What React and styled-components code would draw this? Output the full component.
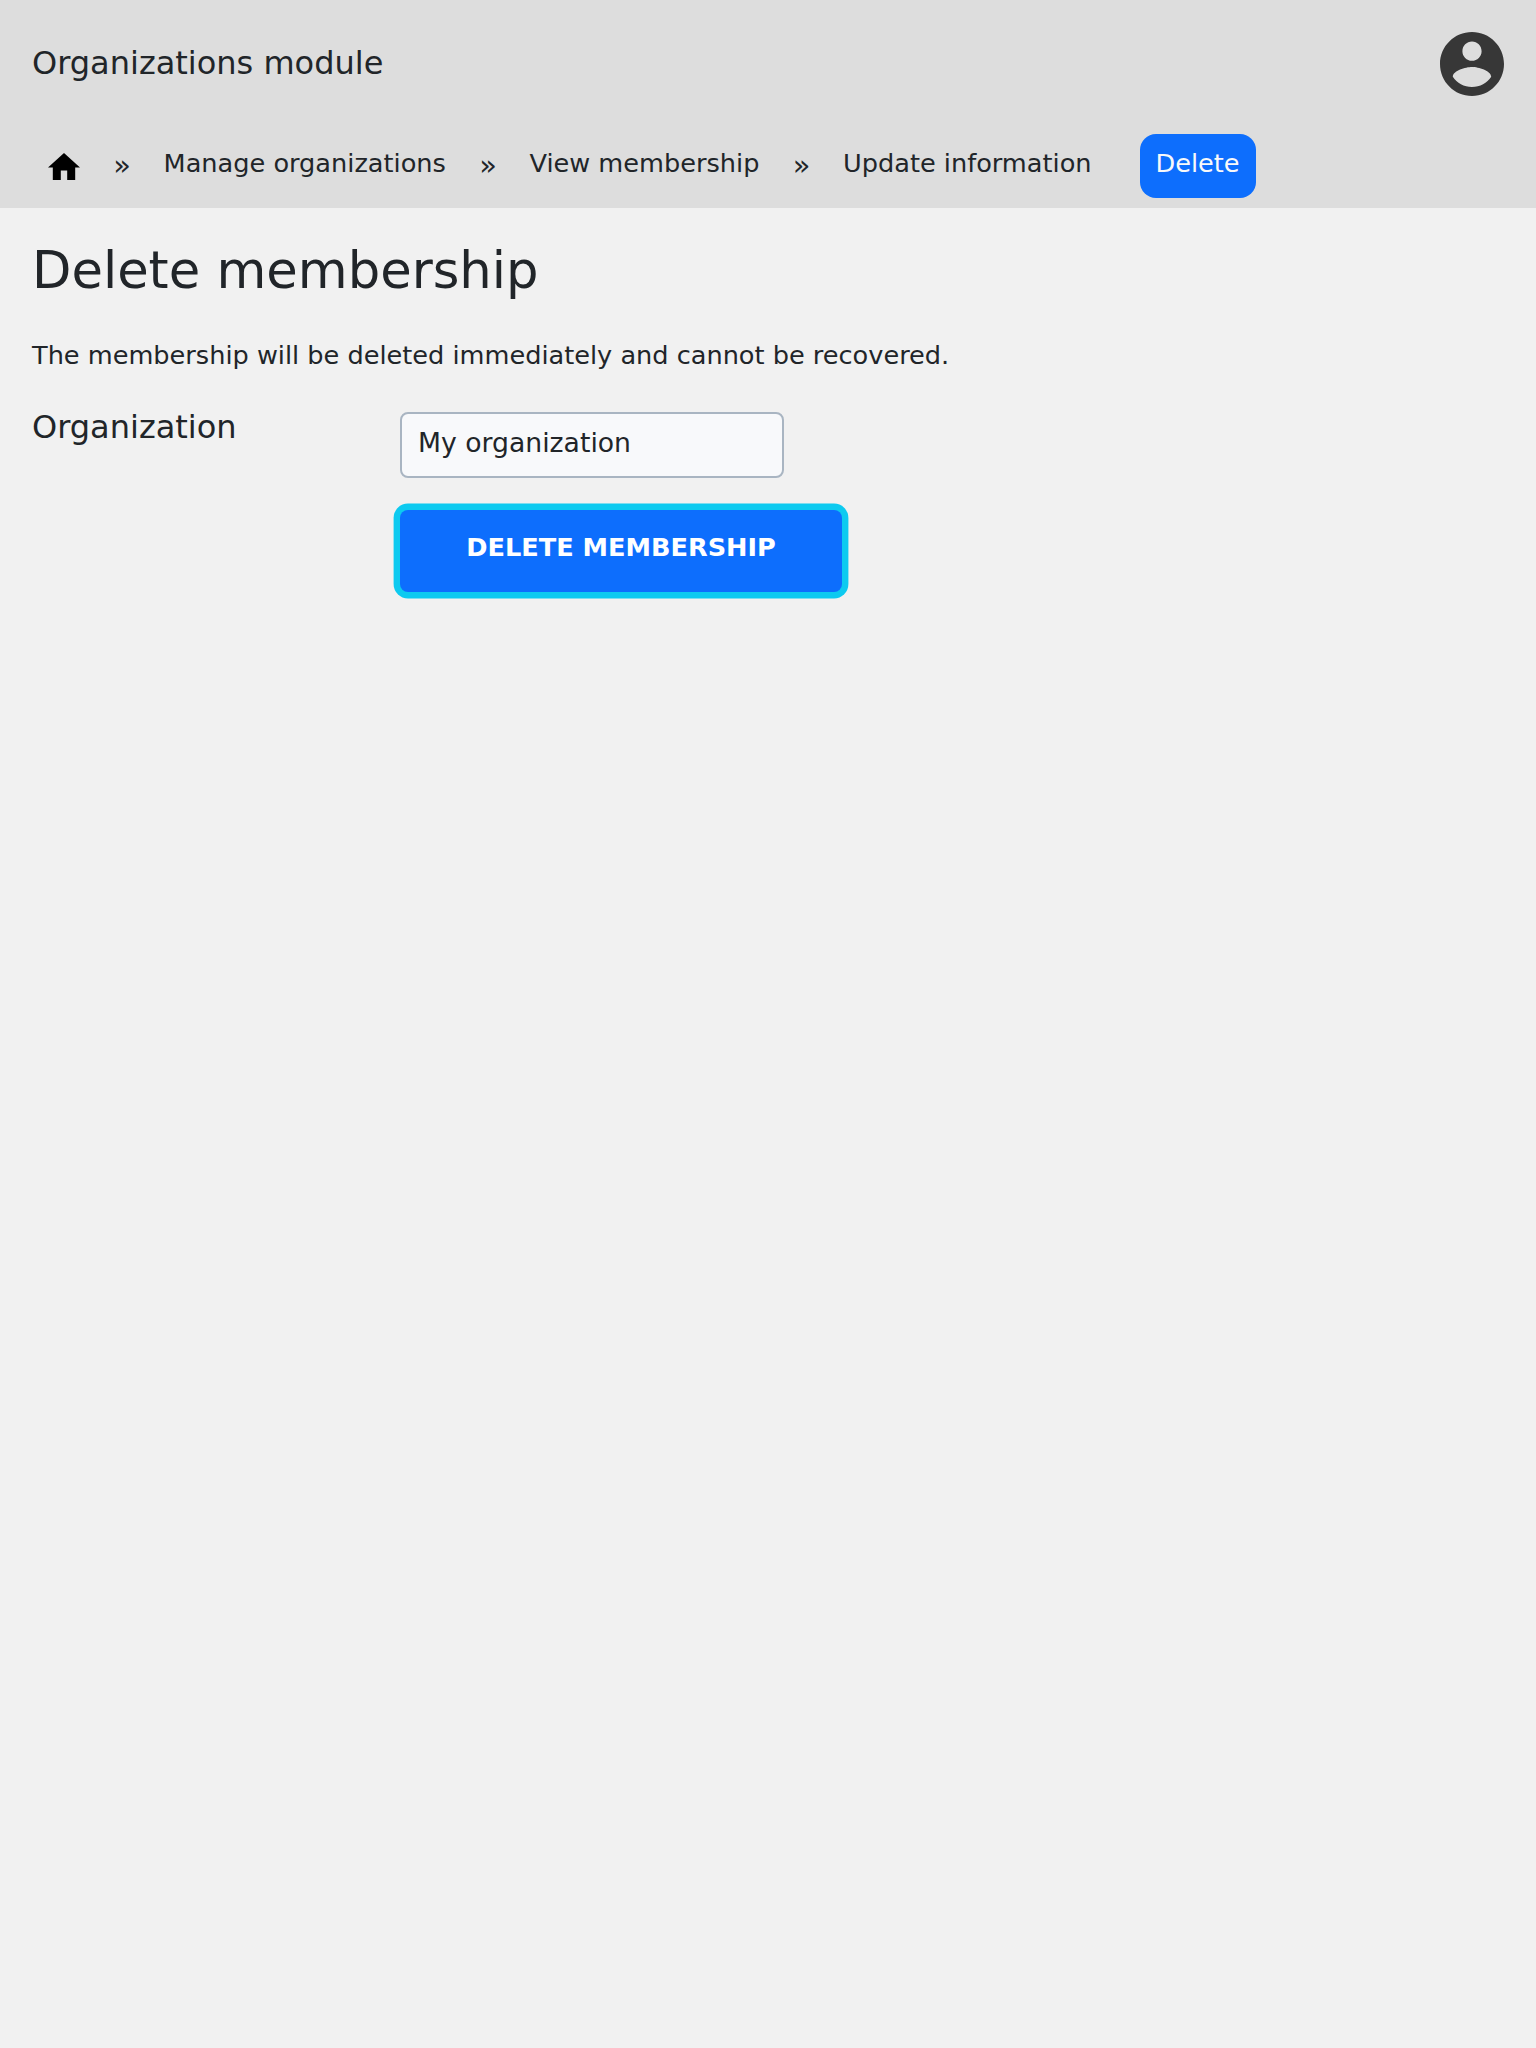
import React from "react";
import styled, { createGlobalStyle } from "styled-components";

const GlobalStyle = createGlobalStyle`
  *, *::before, *::after { box-sizing: border-box; }
  body {
    margin: 0;
    min-height: 100vh;
    background: #f1f1f1;
    color: #212529;
    font-family: "DejaVu Sans", sans-serif;
    font-size: 25.6px;
    line-height: 38.4px;
  }
`;

const Header = styled.header`
  height: 208px;
  background: #dddddd;
`;

const TopBar = styled.div`
  display: flex;
  align-items: center;
  justify-content: space-between;
  height: 128px;
  padding: 0 32px;
`;

const ModuleName = styled.div`
  font-size: 32px;
  line-height: 48px;
  padding-bottom: 2px;
`;

const Avatar = styled.svg`
  display: block;
  width: 64px;
  height: 64px;
  fill: #373737;
`;

const Nav = styled.nav`
  display: flex;
  align-items: flex-start;
  padding: 6px 32px 0;
`;

const HomeLink = styled.a`
  padding: 18.6px 16px 0;
`;

const HomeIcon = styled.svg`
  display: block;
  width: 32px;
  height: 27.2px;
  fill: #000;
`;

const NavLink = styled.a`
  display: block;
  height: 64px;
  padding: 10px 16px 0;
  border-radius: 16px;
  white-space: nowrap;
  color: ${(p) => (p.$active ? "#f8f9fa" : "inherit")};
  background: ${(p) => (p.$active ? "#0d6efd" : "transparent")};
  margin-left: ${(p) => (p.$active ? "32px" : "0")};
`;

const Separator = styled.span`
  width: 51.6px;
  padding: 12px 0 0 0.6px;
  text-align: center;
  font-size: 28.8px;
`;

const Main = styled.main`
  padding: 32px;
`;

const Title = styled.h1`
  margin: 0;
  font-size: 51.2px;
  font-weight: 400;
  line-height: 61px;
`;

const Notice = styled.p`
  margin: 35px 0 0;
`;

const Form = styled.form`
  display: grid;
  grid-template-columns: 368px max-content;
  row-gap: 32px;
  margin-top: 38px;
`;

const Label = styled.label`
  font-size: 32px;
  line-height: 30px;
`;

const Value = styled.output`
  display: block;
  width: 384px;
  height: 66px;
  padding: 10px 16px;
  border: 2px solid #a9b5c2;
  border-radius: 8px;
  background: #f8f9fb;
  font-size: 26.667px;
`;

const SubmitButton = styled.button`
  grid-column: 2;
  width: 442px;
  height: 82px;
  padding: 0 0 8px;
  border: 0;
  border-radius: 8px;
  background: #0d6efd;
  box-shadow: 0 0 0 6.4px #0dcaf0;
  color: #fff;
  font: bold 25.6px/38.4px "DejaVu Sans", sans-serif;
  text-transform: uppercase;
`;

const trail = ["Manage organizations", "View membership", "Update information"];

export default function App() {
  return (
    <>
      <GlobalStyle />
      <Header>
        <TopBar>
          <ModuleName>Organizations module</ModuleName>
          <Avatar viewBox="2 2 20 20" aria-label="Account">
            <path d="M12 2C6.48 2 2 6.48 2 12s4.48 10 10 10 10-4.48 10-10S17.52 2 12 2zm0 3c1.66 0 3 1.34 3 3s-1.34 3-3 3-3-1.34-3-3 1.34-3 3-3zm0 14.2c-2.5 0-4.71-1.28-6-3.22.03-1.99 4-3.08 6-3.08 1.99 0 5.97 1.09 6 3.08-1.29 1.94-3.5 3.22-6 3.22z" />
          </Avatar>
        </TopBar>
        <Nav>
          <HomeLink aria-label="Home">
            <HomeIcon viewBox="2 3 20 17">
              <path d="M10 20v-6h4v6h5v-8h3L12 3 2 12h3v8z" />
            </HomeIcon>
          </HomeLink>
          {trail.map((name) => (
            <React.Fragment key={name}>
              <Separator>»</Separator>
              <NavLink>{name}</NavLink>
            </React.Fragment>
          ))}
          <NavLink $active>Delete</NavLink>
        </Nav>
      </Header>
      <Main>
        <Title>Delete membership</Title>
        <Notice>The membership will be deleted immediately and cannot be recovered.</Notice>
        <Form>
          <Label>Organization</Label>
          <Value>My organization</Value>
          <SubmitButton type="button">Delete membership</SubmitButton>
        </Form>
      </Main>
    </>
  );
}
